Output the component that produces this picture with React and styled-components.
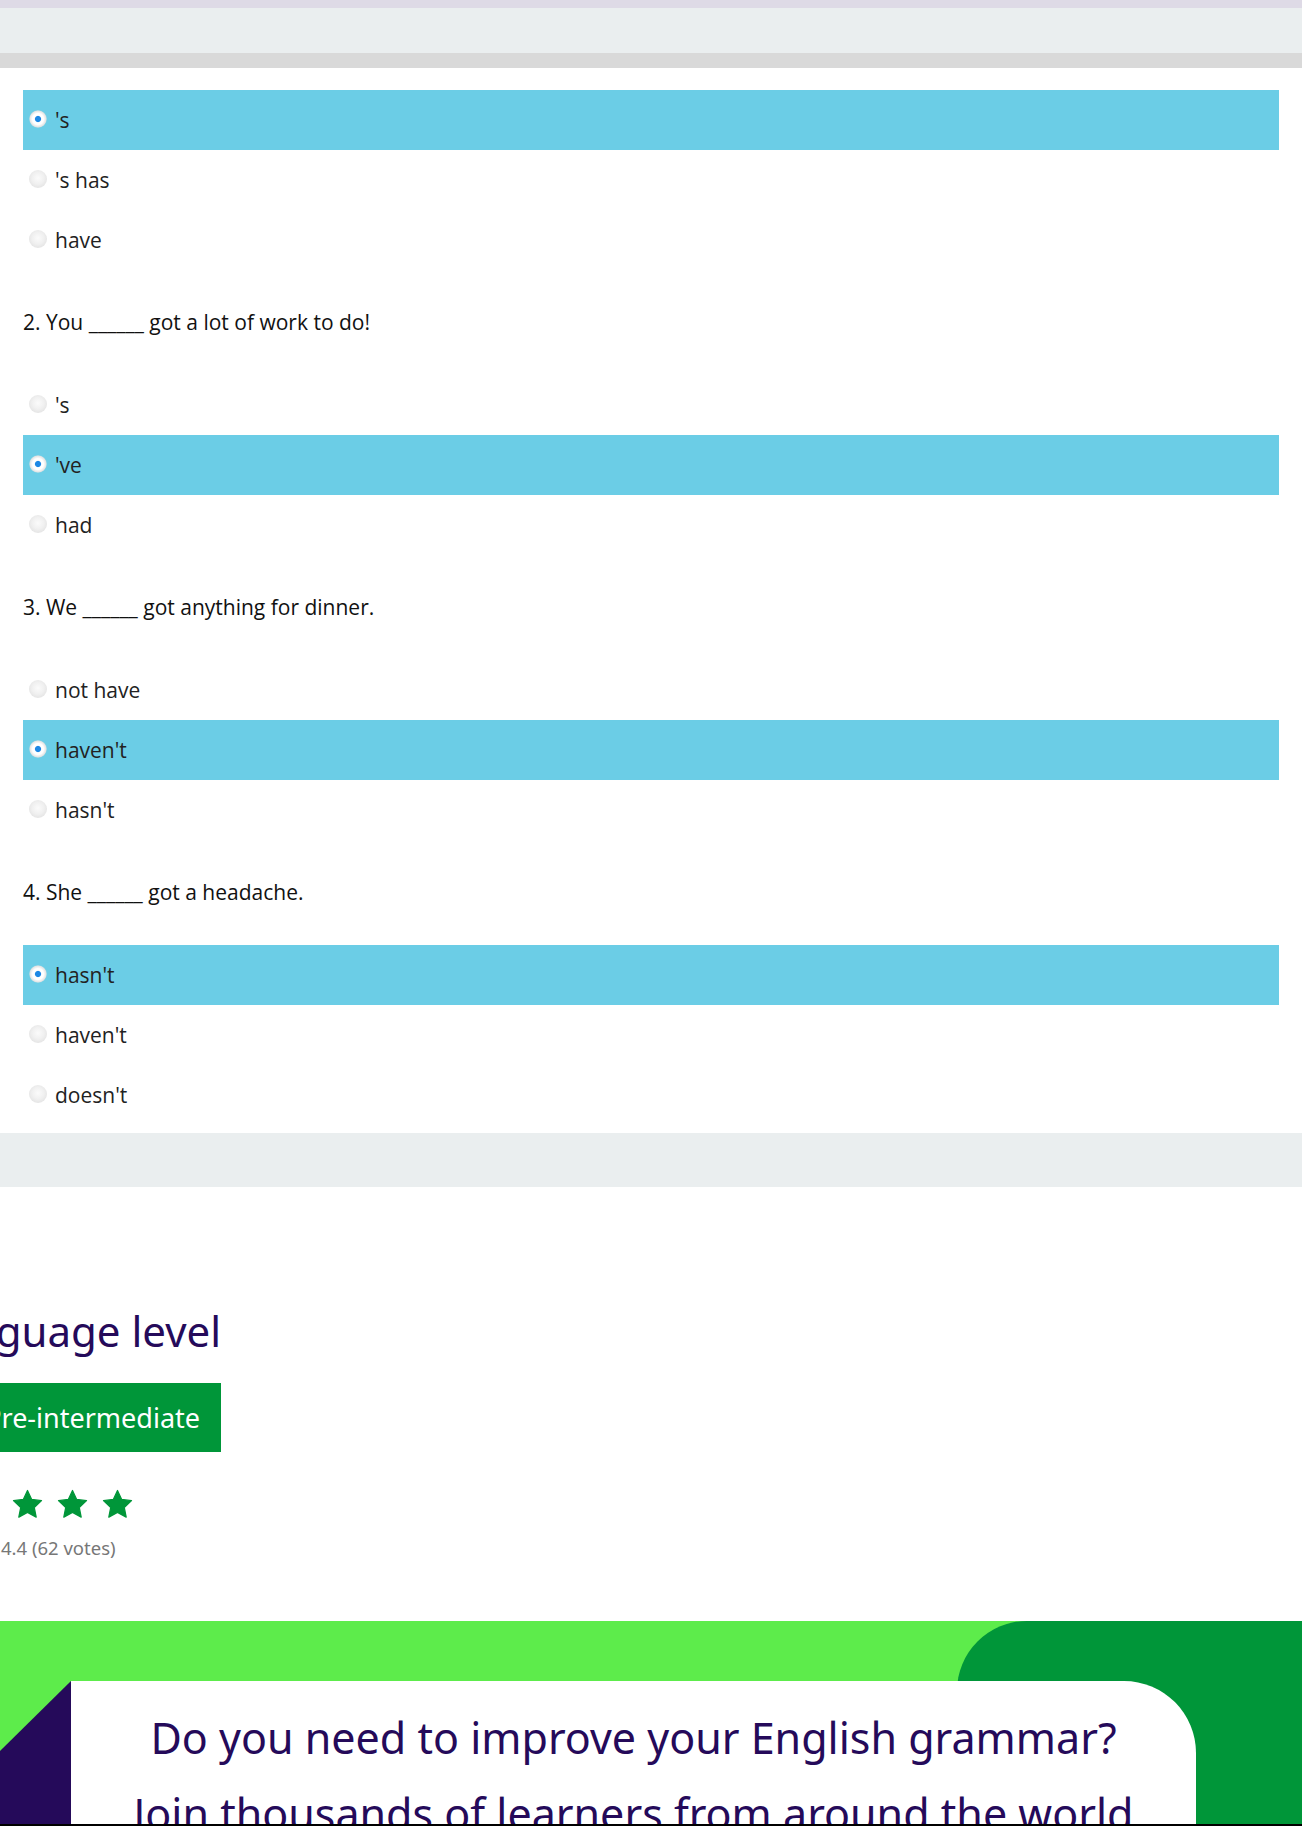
import React from 'react';
import styled, { createGlobalStyle } from 'styled-components';

const GlobalStyle = createGlobalStyle`
  html, body { margin: 0; padding: 0; background: #fff; }
  body { font-family: "Open Sans", "Noto Sans", sans-serif; overflow-x: hidden; }
  * { box-sizing: border-box; }
`;

const Page = styled.div`
  width: 1302px;
  overflow: hidden;
`;

const TopStrip = styled.div`
  height: 8px;
  background: #dedae6;
`;

const Toolbar = styled.div`
  height: 45px;
  background: #eaeeef;
`;

const ToolbarShadow = styled.div`
  height: 15px;
  background: #d9d9d9;
`;

const Quiz = styled.div`
  padding: 22px 23px 8px;
`;

const QuestionText = styled.p`
  margin: 0;
  padding: 40px 0 41px;
  font-size: 21px;
  line-height: 24px;
  color: #111;
`;

const OptionRow = styled.label`
  display: flex;
  align-items: center;
  gap: 8px;
  height: 60px;
  padding-left: 6px;
  background: ${(p) => (p.$selected ? '#6bcde6' : 'transparent')};
  font-size: 21px;
  color: #222;
`;

const Radio = styled.span`
  flex: none;
  width: 18px;
  height: 18px;
  margin-top: -3px;
  border-radius: 50%;
  background: ${(p) =>
    p.$checked
      ? 'radial-gradient(circle, #1e88e5 0 2.6px, #ffffff 3.6px, #ffffff 5.5px, #e4e4e4 8px, rgba(220,220,220,0.2) 9px)'
      : 'radial-gradient(circle at 50% 45%, #fbfbfb 0%, #f0f0f0 45%, #e2e2e2 80%, rgba(220,220,220,0.3) 100%)'};
`;

const GrayBand = styled.div`
  height: 54px;
  background: #eaeeef;
`;

const LevelSection = styled.section`
  width: 221px;
  padding: 116px 0 61px;
  display: flex;
  flex-direction: column;
  align-items: flex-end;
`;

const LevelTitle = styled.h2`
  margin: 0;
  font-family: "Noto Sans", "Open Sans", sans-serif;
  font-weight: 400;
  font-size: 42px;
  line-height: 55px;
  color: #250a5a;
  white-space: nowrap;
`;

const LevelBadge = styled.div`
  margin-top: 25px;
  height: 69px;
  line-height: 69px;
  padding: 0 21px 0 20px;
  background: #009639;
  color: #fff;
  font-family: "Noto Sans", "Open Sans", sans-serif;
  font-size: 27px;
  white-space: nowrap;
`;

const StarsRow = styled.div`
  align-self: flex-start;
  margin: 36px 0 0 -79px;
  display: flex;
  gap: 12px;
`;

const Votes = styled.div`
  align-self: flex-start;
  margin-top: 15px;
  padding-left: 1px;
  font-family: "Noto Sans", "Open Sans", sans-serif;
  font-size: 18.5px;
  line-height: 24px;
  color: #777;
  white-space: nowrap;
`;

const Footer = styled.footer`
  position: relative;
  height: 203px;
  overflow: hidden;
  padding-top: 60px;
  background: #5dec4b;
`;

const GreenBlob = styled.div`
  position: absolute;
  top: 0;
  left: 957px;
  right: 0;
  bottom: 0;
  background: #009639;
  border-top-left-radius: 70px;
`;

const PurpleWedge = styled.div`
  position: absolute;
  left: 0;
  top: 60px;
  width: 71px;
  bottom: 0;
  background: #250a5a;
  clip-path: polygon(100% 0, 100% 100%, 0 100%, 0 70px);
`;

const Card = styled.div`
  position: relative;
  margin-left: 71px;
  width: 1125px;
  padding: 30px 40px 40px;
  background: #fff;
  border-top-right-radius: 72px;
  text-align: center;
  font-family: "Noto Sans", "Open Sans", sans-serif;
  color: #250a5a;
`;

const CardLine = styled.p`
  margin: ${(p) => (p.$first ? '0' : '22px 0 0')};
  font-size: 43px;
  line-height: 54px;
`;

const BottomEdge = styled.div`
  height: 2px;
  background: #000;
`;

const StarIcon = () => (
  <svg width="33" height="33" viewBox="0 0 24 24">
    <path
      d="M12 1.8l3.05 6.55 7.15.85-5.28 4.93 1.4 7.07L12 17.7l-6.32 3.5 1.4-7.07L1.8 9.2l7.15-.85z"
      fill="#009639"
      stroke="#009639"
      strokeWidth="0.9"
      strokeLinejoin="round"
    />
  </svg>
);

const questions = [
  { text: null, options: ["'s", "'s has", 'have'], selected: 0 },
  { text: '2. You ______ got a lot of work to do!', options: ["'s", "'ve", 'had'], selected: 1 },
  { text: '3. We ______ got anything for dinner.', options: ['not have', "haven't", "hasn't"], selected: 1 },
  { text: '4. She ______ got a headache.', options: ["hasn't", "haven't", "doesn't"], selected: 0 },
];

export default function App() {
  return (
    <Page>
      <GlobalStyle />
      <TopStrip />
      <Toolbar />
      <ToolbarShadow />
      <Quiz>
        {questions.map((q, qi) => (
          <div key={qi}>
            {q.text && <QuestionText>{q.text}</QuestionText>}
            {q.options.map((o, oi) => (
              <OptionRow key={oi} $selected={oi === q.selected}>
                <Radio $checked={oi === q.selected} />
                {o}
              </OptionRow>
            ))}
          </div>
        ))}
      </Quiz>
      <GrayBand />
      <LevelSection>
        <LevelTitle>Language level</LevelTitle>
        <LevelBadge>Pre-intermediate</LevelBadge>
        <StarsRow>
          {[0, 1, 2, 3, 4].map((i) => (
            <StarIcon key={i} />
          ))}
        </StarsRow>
        <Votes>4.4 (62 votes)</Votes>
      </LevelSection>
      <Footer>
        <GreenBlob />
        <PurpleWedge />
        <Card>
          <CardLine $first>Do you need to improve your English grammar?</CardLine>
          <CardLine>Join thousands of learners from around the world who are improving their English grammar with our online courses.</CardLine>
        </Card>
      </Footer>
      <BottomEdge />
    </Page>
  );
}
